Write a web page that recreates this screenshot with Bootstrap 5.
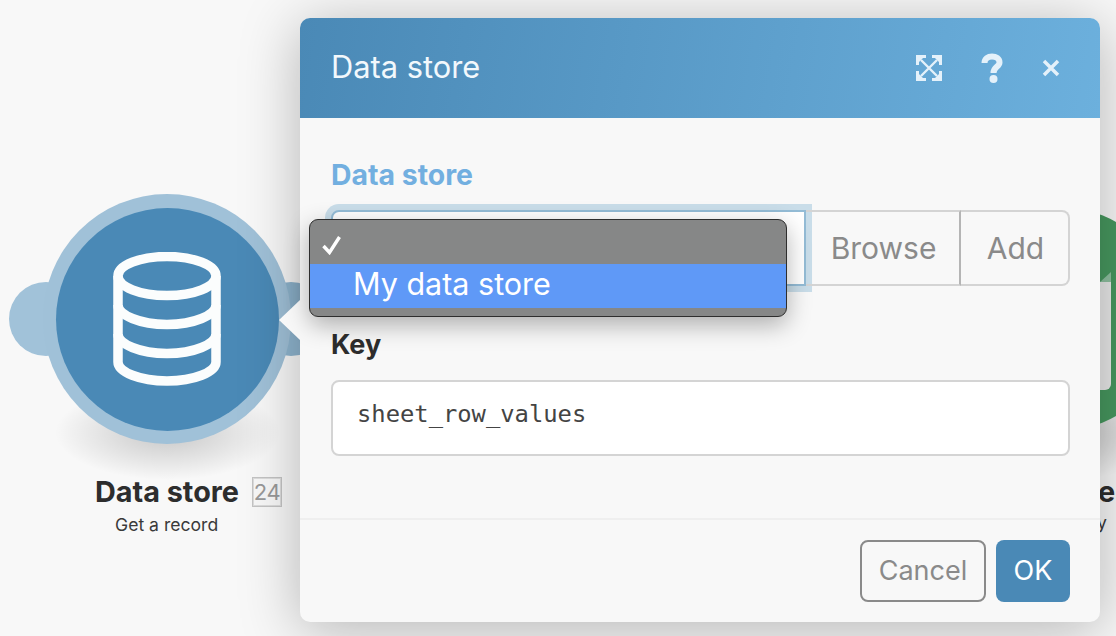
<!doctype html>
<html lang="en">
<head>
  <meta charset="utf-8">
  <title>Data store</title>
  <link href="https://cdn.jsdelivr.net/npm/bootstrap@5.3.3/dist/css/bootstrap.min.css" rel="stylesheet">
  <style>
    html, body { height: 100%; }
    body { background: #f8f8f8; font-family: Inter, "Liberation Sans", sans-serif; color: #2d2d2d; overflow: hidden; }
    .scene { position: relative; width: 1116px; height: 636px; overflow: hidden; }

    /* scenario nodes on the canvas */
    .node-handle { position: absolute; left: 9px; top: 282px; width: 74px; height: 74px; border-radius: 50%; background: #a1c2d9; }
    .node-handle-right { position: absolute; left: 254px; top: 282px; width: 74px; height: 74px; border-radius: 50%; background: #8fb5cf; }
    .node-shadow { position: absolute; left: 55px; top: 385px; width: 225px; height: 95px; border-radius: 50%; background: radial-gradient(closest-side, rgba(0,0,0,.2), rgba(0,0,0,0)); }
    .node-ring { position: absolute; left: 43px; top: 194px; width: 248px; height: 250px; border-radius: 50%; background: #a0c1d8; display: flex; align-items: center; justify-content: center; }
    .node-disc { width: 223px; height: 223px; border-radius: 50%; background: #4a89b6; display: flex; align-items: center; justify-content: center; }
    .node-title { position: absolute; left: 95px; top: 474px; display: flex; align-items: center; gap: 13px; font-size: 28.8px; font-weight: 700; line-height: 36px; white-space: nowrap; }
    .node-count { width: 30px; height: 30px; border: 1px solid #c4c4c4; outline: 1px solid #dcdcdc; outline-offset: -2px; color: #999; font-size: 22px; font-weight: 400; line-height: 28px; text-align: center; letter-spacing: -.5px; }
    .node-sub { position: absolute; left: 115px; top: 514px; font-size: 17.6px; line-height: 22px; color: #3a3a3a; white-space: nowrap; }
    .other-shadow { position: absolute; left: 950px; top: 385px; width: 225px; height: 95px; border-radius: 50%; background: radial-gradient(closest-side, rgba(0,0,0,.2), rgba(0,0,0,0)); }
    .other-node { position: absolute; left: 948px; top: 207px; width: 224px; height: 224px; border-radius: 50%; background: #47985f; }
    .other-sheet { position: absolute; left: 1060px; top: 282px; width: 51px; height: 108px; border-radius: 0 0 6px 0; background: #e9e9e9; }
    .other-fold { position: absolute; left: 1100px; top: 272px; width: 0; height: 0; border-style: solid; border-width: 0 0 10px 11px; border-color: transparent transparent #8fc0a0 transparent; }
    .other-title { position: absolute; left: 1098px; top: 474px; font-size: 28.8px; font-weight: 700; line-height: 36px; }
    .other-sub { position: absolute; left: 1097px; top: 512px; font-size: 17.6px; line-height: 22px; color: #3a3a3a; }

    /* dialog */
    .dlg { position: absolute; left: 300px; top: 18px; width: 800px; height: 604px; background: #f8f8f8; border: 0; border-radius: 10px; box-shadow: 0 8px 60px rgba(0,0,0,.28); }
    .dlg-arrow { position: absolute; left: -21px; top: 282px; width: 0; height: 0; border-style: solid; border-width: 20px 21px 20px 0; border-color: transparent #f8f8f8 transparent transparent; }
    .dlg-head { height: 100px; padding: 0 31px; border: 0; border-radius: 10px 10px 0 0; background: linear-gradient(100deg, #4a89b6, #6cb0dd); color: #fff; }
    .dlg-title { font-size: 30.8px; font-weight: 400; line-height: 36px; color: #f2f8fc; margin-bottom: 2px; }
    .dlg-tools { gap: 39px; margin-right: 9px; }
    .dlg-tools svg { display: block; }
    .dlg-body { padding: 39px 30px 0 31px; }
    .dlg-label { font-size: 28.4px; font-weight: 700; line-height: 36px; margin-bottom: 17px; display: block; }
    .dlg-label-on { color: #72afe0; }
    .dlg-label-key { font-size: 27px; }
    .dlg-group { --bs-border-width: 0px; height: 76px; margin-bottom: 41px; }
    .dlg-select { width: 475px; height: 76px; background: #fff; border: 2px solid #94bcd6; border-radius: 8px 0 0 8px; box-shadow: 0 0 0 6px #c9dde9; position: relative; z-index: 1; }
    .dlg-addon { height: 76px; padding: 0 0 0 2px; background: transparent; border: 2px solid #d4d4d4; border-left: 0; border-radius: 0; color: #8a8a8a; font-size: 30px; line-height: 1; }
    .dlg-addon-browse { width: 155px; border-right: 2px solid #b5b5b5; }
    .dlg-addon-add { width: 109px; border-radius: 0 8px 8px 0; }
    .dlg-key { height: 76px; padding: 0 24px 8px; background: #fff; border: 2px solid #d4d4d4; border-radius: 8px; font-family: "DejaVu Sans Mono", "Liberation Mono", monospace; font-size: 23.8px; color: #444; }
    .dlg-foot { position: absolute; left: 0; right: 0; bottom: 0; height: 104px; padding: 0 30px 20px 0; border-top: 2px solid #efefef; background: transparent; align-items: flex-end; border-radius: 0; }
    .dlg-cancel { width: 126px; height: 62px; padding: 0; border: 2px solid #8a8a8a; border-radius: 8px; background: transparent; color: #8a8a8a; font-size: 27px; }
    .dlg-ok { width: 74px; height: 62px; padding: 0; border: 0; border-radius: 8px; background: #4a89b6; color: #fff; font-size: 27px; margin-left: 10px; }

    /* native select popup */
    .popup { position: absolute; z-index: 2; left: 309px; top: 219px; width: 478px; height: 98px; background: #868787; border: 1px solid #2e2e2e; border-radius: 9px; box-shadow: 0 8px 24px rgba(0,0,0,.3); overflow: hidden; }
    .popup-row { height: 44px; display: flex; align-items: center; }
    .popup-row svg { margin: 6px 0 0 12px; }
    .popup-row-on { background: #5f99f7; color: #fff; font-size: 30.5px; padding: 0 0 4px 43px; }
  </style>
</head>
<body>
  <div class="scene">
    <div class="other-shadow"></div>
    <div class="other-node"></div>
    <div class="other-sheet"></div>
    <div class="other-fold"></div>
    <div class="other-title">e</div>
    <div class="other-sub">y</div>

    <div class="node-shadow"></div>
    <div class="node-handle"></div>
    <div class="node-handle-right"></div>
    <div class="node-ring">
      <div class="node-disc">
        <svg width="110" height="134" viewBox="0 0 110 134" fill="none" stroke="#fbfdfd" stroke-width="9.500">
          <ellipse cx="55" cy="24" rx="49" ry="19.500"/>
          <path d="M6 24V110C6 120 28 129 55 129S104 120 104 110V24"/>
          <path d="M6 53C6 63 28 72.500 55 72.500S104 63 104 53"/>
          <path d="M6 82C6 92 28 101.500 55 101.500S104 92 104 82"/>
        </svg>
      </div>
    </div>
    <div class="node-title">Data store <span class="node-count">24</span></div>
    <div class="node-sub">Get a record</div>

    <div class="modal-content dlg">
      <div class="dlg-arrow"></div>
      <div class="modal-header dlg-head d-flex justify-content-between">
        <h5 class="modal-title dlg-title">Data store</h5>
        <div class="d-flex align-items-center dlg-tools">
          <svg width="26" height="26" viewBox="0 0 26 26" fill="none" stroke="#e4f1fa" stroke-width="2.400">
            <path d="M5 5 21 21M21 5 5 21"/>
            <path d="M1.500 10V1.500H10M16 1.500H24.500V10M24.500 16V24.500H16M10 24.500H1.500V16" stroke-width="3"/>
            <path d="M2 2H8L2 8ZM24 2H18L24 8ZM24 24H18L24 18ZM2 24H8L2 18Z" fill="#e4f1fa" stroke="none"/>
          </svg>
          <svg width="22" height="30" viewBox="0 0 22 30">
            <path d="M3.500 10C3.500 5.500 7 3.500 11 3.500S18.500 5.500 18.500 9.500C18.500 14 12.500 13.500 12.500 20" fill="none" stroke="#e4f1fa" stroke-width="6"/>
            <circle cx="12.500" cy="26" r="4" fill="#e4f1fa"/>
          </svg>
          <svg width="18" height="18" viewBox="0 0 18 18" stroke="#e4f1fa" stroke-width="3.500">
            <path d="M2 2 16 16M16 2 2 16"/>
          </svg>
        </div>
      </div>
      <div class="modal-body dlg-body">
        <label class="dlg-label dlg-label-on">Data store</label>
        <div class="input-group flex-nowrap dlg-group">
          <div class="dlg-select"></div>
          <button type="button" class="btn dlg-addon dlg-addon-browse">Browse</button>
          <button type="button" class="btn dlg-addon dlg-addon-add">Add</button>
        </div>
        <label class="dlg-label dlg-label-key">Key</label>
        <input type="text" class="form-control dlg-key" value="sheet_row_values">
      </div>
      <div class="modal-footer dlg-foot">
        <button type="button" class="btn dlg-cancel">Cancel</button>
        <button type="button" class="btn dlg-ok">OK</button>
      </div>
    </div>

    <div class="popup">
      <div class="popup-row">
        <svg width="20" height="20" viewBox="0 0 20 20" fill="none" stroke="#fff" stroke-width="3.400"><path d="M1.500 11 7.500 17.500 17.500 2"/></svg>
      </div>
      <div class="popup-row popup-row-on">My data store</div>
    </div>
  </div>
  <script src="https://cdn.jsdelivr.net/npm/bootstrap@5.3.3/dist/js/bootstrap.bundle.min.js"></script>
</body>
</html>
